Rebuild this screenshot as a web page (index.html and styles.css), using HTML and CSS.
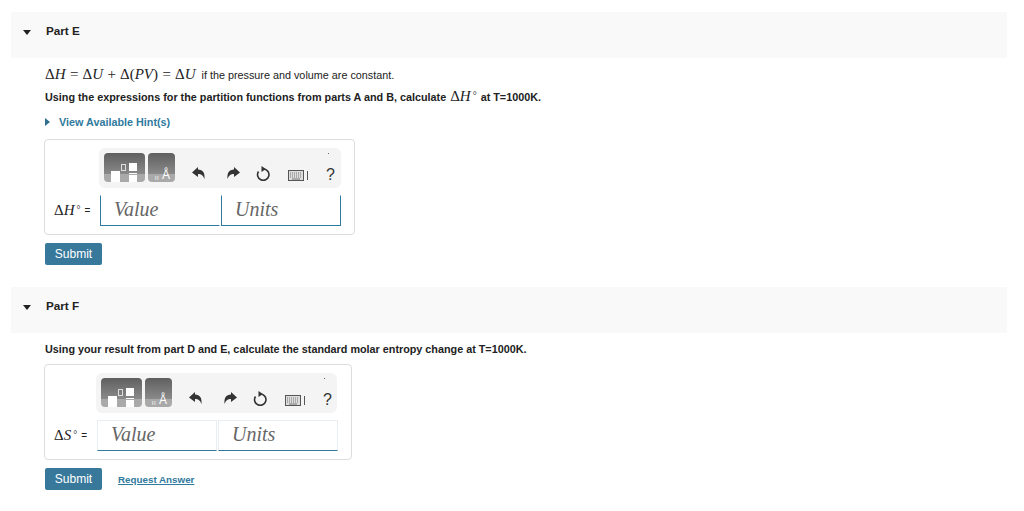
FILE: index.html
```html
<!DOCTYPE html>
<html lang="en">
  <head>
    <meta charset="UTF-8" />
    <title>Part E and F</title>
    <link rel="stylesheet" href="styles.css">
  </head>
  <body>

    <!-- part E -->
    <div class="part-head">
      <span class="arrow-down"></span>
      <span class="part-title">Part E</span>
    </div>
    <div class="part-body">
      <p class="eq-line"><span class="math"><span class="up">&Delta;</span>H = <span class="up">&Delta;</span>U + <span class="up">&Delta;(</span>PV<span class="up">)</span> = <span class="up">&Delta;</span>U</span> if the pressure and volume are constant.</p>
      <p class="question q-e">Using the expressions for the partition functions from parts A and B, calculate <span class="math"><span class="up">&Delta;</span>H<sup>&deg;</sup></span> at T=1000K.</p>
      <div class="hint"><span class="arrow-right"></span>View Available Hint(s)</div>

      <div class="answer-box">
        <div class="toolbar">
          <div class="palette pal-wide">
            <span class="sq sq-big"></span><span class="sq sq-out"></span>
            <span class="frac"><span class="sq sq-top"></span><span class="frac-line"></span><span class="sq sq-bot"></span></span>
          </div>
          <div class="palette pal-small"><span class="pal-bars">ıı</span><span class="pal-a">&Aring;</span></div>
          <div class="tools">
            <svg class="tool" viewBox="0 0 14 14"><path d="M6 1 0 6.500 6 11V8c3 0 5 1 6.500 5 .5-6-1.500-9.500-6.500-9.500z" fill="#333"/></svg>
            <svg class="tool tool-redo" viewBox="0 0 14 14"><path d="M8 1l6 5.500L8 11V8c-3 0-5 1-6.500 5C1 7 3 3.500 8 3.500z" fill="#333"/></svg>
            <svg class="tool tool-reset" viewBox="0 0 14 15"><path d="M8 3A5.700 5.700 0 1 1 2.500 5.500" fill="none" stroke="#333" stroke-width="1.600"/><path d="M5.500 0 9.800 3 5.500 6z" fill="#333"/></svg>
            <span class="kbd"><svg viewBox="0 0 16 11" width="16" height="11"><rect x=".5" y=".5" width="15" height="10" fill="#ddd" stroke="#555"/><path d="M2 3h12M2 5h12M2 7h12" stroke="#777" stroke-dasharray="1 1"/><path d="M4 9h8" stroke="#777"/></svg><i></i></span>
            <span class="help">?</span>
          </div>
        </div>
        <div class="answer-row">
          <span class="label"><span class="math"><span class="up">&Delta;</span>H<sup>&deg;</sup></span> =</span>
          <div class="field field-e">Value</div>
          <div class="field field-e">Units</div>
        </div>
      </div>
      <div class="actions"><button class="submit">Submit</button></div>
    </div>

    <!-- part F -->
    <div class="part-head">
      <span class="arrow-down"></span>
      <span class="part-title">Part F</span>
    </div>
    <div class="part-body">
      <p class="question q-f">Using your result from part D and E, calculate the standard molar entropy change at T=1000K.</p>

      <div class="answer-box box-f">
        <div class="toolbar">
          <div class="palette pal-wide">
            <span class="sq sq-big"></span><span class="sq sq-out"></span>
            <span class="frac"><span class="sq sq-top"></span><span class="frac-line"></span><span class="sq sq-bot"></span></span>
          </div>
          <div class="palette pal-small"><span class="pal-bars">ıı</span><span class="pal-a">&Aring;</span></div>
          <div class="tools">
            <svg class="tool" viewBox="0 0 14 14"><path d="M6 1 0 6.500 6 11V8c3 0 5 1 6.500 5 .5-6-1.500-9.500-6.500-9.500z" fill="#333"/></svg>
            <svg class="tool tool-redo" viewBox="0 0 14 14"><path d="M8 1l6 5.500L8 11V8c-3 0-5 1-6.500 5C1 7 3 3.500 8 3.500z" fill="#333"/></svg>
            <svg class="tool tool-reset" viewBox="0 0 14 15"><path d="M8 3A5.700 5.700 0 1 1 2.500 5.500" fill="none" stroke="#333" stroke-width="1.600"/><path d="M5.500 0 9.800 3 5.500 6z" fill="#333"/></svg>
            <span class="kbd"><svg viewBox="0 0 16 11" width="16" height="11"><rect x=".5" y=".5" width="15" height="10" fill="#ddd" stroke="#555"/><path d="M2 3h12M2 5h12M2 7h12" stroke="#777" stroke-dasharray="1 1"/><path d="M4 9h8" stroke="#777"/></svg><i></i></span>
            <span class="help">?</span>
          </div>
        </div>
        <div class="answer-row">
          <span class="label"><span class="math"><span class="up">&Delta;</span>S<sup>&deg;</sup></span> =</span>
          <div class="field">Value</div>
          <div class="field">Units</div>
        </div>
      </div>
      <div class="actions"><button class="submit">Submit</button><a class="request" href="#">Request Answer</a></div>
    </div>

  </body>
</html>
```
FILE: styles.css
```css
* {
  padding: 0;
  margin: 0;
  box-sizing: border-box;
}
body {
  padding: 12px 17px 0 11px;
  font-family: "Liberation Sans", Arial, sans-serif;
  font-size: 10.8px;
  color: #222;
  background: #fff;
}

/* part header */
.part-head {
  height: 46px;
  background-color: #f9f9f9;
  display: flex;
  align-items: flex-start;
  padding: 12px 0 0 12px;
}
.part-title {
  font-size: 11.7px;
  font-weight: bold;
  line-height: 14px;
  margin-left: 15px;
}
.arrow-down {
  width: 0;
  height: 0;
  margin-top: 6px;
  border-left: 4px solid transparent;
  border-right: 4px solid transparent;
  border-top: 5px solid #222;
}

.part-body {
  padding-left: 33px;
  padding-bottom: 22px;
}

.math {
  font-family: "Liberation Serif", serif;
  font-style: italic;
  font-size: 15px;
  line-height: 1;
}
.math .up {
  font-style: normal;
}
.math sup {
  font-size: 10px;
  line-height: 0;
  font-style: normal;
  vertical-align: 2px;
  margin-left: 2px;
}
.eq-line {
  line-height: 16px;
  margin-top: 9px;
  margin-left: 1px;
}
.eq-line .math {
  word-spacing: -0.3px;
  margin-right: 3px;
}
.question {
  font-weight: bold;
  line-height: 16px;
  margin-left: 1px;
}
.question .math {
  font-weight: normal;
  margin: 0 1px;
}
.q-e {
  margin-top: 6px;
}
.q-f {
  margin-top: 8px;
}
.hint {
  margin-top: 9px;
  line-height: 16px;
  font-weight: bold;
  color: #2f7a9e;
  display: flex;
  align-items: center;
  margin-left: 1px;
}
.arrow-right {
  width: 0;
  height: 0;
  margin-right: 9px;
  border-top: 4px solid transparent;
  border-bottom: 4px solid transparent;
  border-left: 5px solid #2f6f8f;
}

/* answer box */
.answer-box {
  width: 311px;
  height: 96px;
  margin-top: 9px;
  padding: 8px 0 0 9px;
  border: 1px solid #ddd;
  border-radius: 4px;
}
.box-f {
  width: 308px;
  margin-top: 7px;
}
.toolbar {
  position: relative;
  width: 242px;
  height: 40px;
  margin-left: 45px;
  padding: 5px;
  display: flex;
  gap: 3px;
  background: #f4f4f4;
  border-radius: 6px;
}
.toolbar::after {
  content: "";
  position: absolute;
  top: 5px;
  right: 12px;
  width: 1px;
  height: 1px;
  background: #666;
}
.box-f .toolbar {
  width: 241px;
  margin-left: 42px;
}
.palette {
  height: 29px;
  border-radius: 4px;
  background: linear-gradient(#5f5f5f, #8a8a8a 72%, #a9a9a9 72%);
  display: flex;
  align-items: flex-end;
}
.pal-wide {
  width: 41px;
  padding-left: 7px;
}
.pal-small {
  width: 27px;
  justify-content: flex-end;
  padding-right: 5px;
}
.pal-bars {
  font-size: 8px;
  line-height: 9px;
  color: #eee;
  margin-right: 3px;
}
.pal-a {
  font-size: 12px;
  line-height: 13px;
  color: #fff;
}
.sq {
  display: block;
  background: #fff;
}
.sq-big {
  width: 9px;
  height: 11px;
}
.sq-out {
  width: 5px;
  height: 7px;
  background: none;
  border: 1px solid #ddd;
  margin: 0 3px 11px 1px;
}
.frac {
  display: flex;
  flex-direction: column;
}
.sq-top {
  width: 8px;
  height: 8px;
}
.frac-line {
  height: 1px;
  margin: 2px 0 1px;
  background: #fff;
}
.sq-bot {
  width: 8px;
  height: 7px;
}
.tools {
  flex: 1;
  display: flex;
  align-items: center;
  padding: 10px 0 0 14px;
}
.tool {
  width: 14px;
  height: 14px;
  margin-right: 20px;
}
.tool-redo {
  margin-right: 16px;
}
.tool-reset {
  height: 15px;
  margin-right: 18px;
}
.kbd {
  display: flex;
  align-items: center;
  margin-top: 5px;
  margin-right: 18px;
}
.kbd i {
  width: 1px;
  height: 9px;
  margin-left: 3px;
  background: #555;
}
.help {
  font-size: 16px;
  line-height: 16px;
  margin-top: 3px;
  color: #333;
}

.answer-row {
  display: flex;
  align-items: stretch;
  margin-top: 7px;
}
.label {
  width: 46px;
  display: flex;
  align-items: center;
  gap: 4px;
  font-size: 10px;
  white-space: nowrap;
}
.box-f .label {
  width: 43px;
}
.field {
  width: 120px;
  height: 31px;
  margin-right: 1px;
  padding-left: 13px;
  border: 1px solid #e8eef1;
  border-bottom: 1px solid #2f7a9e;
  font-family: "Liberation Serif", serif;
  font-style: italic;
  font-size: 20px;
  line-height: 27px;
  color: #666;
}
.field-e {
  border-color: #fff #fff #2f7a9e #2f7a9e;
}
.field-e + .field-e {
  border-right-color: #2f7a9e;
}

/* buttons */
.actions {
  display: flex;
  align-items: center;
  margin-top: 8px;
  margin-left: 1px;
}
.submit {
  width: 57px;
  height: 22px;
  background-color: #37789b;
  color: #fff;
  border: none;
  border-radius: 2px;
  font-family: inherit;
  font-size: 12px;
}
.request {
  margin-left: 16px;
  color: #2f7a9e;
  font-weight: bold;
  font-size: 9.8px;
}
```
